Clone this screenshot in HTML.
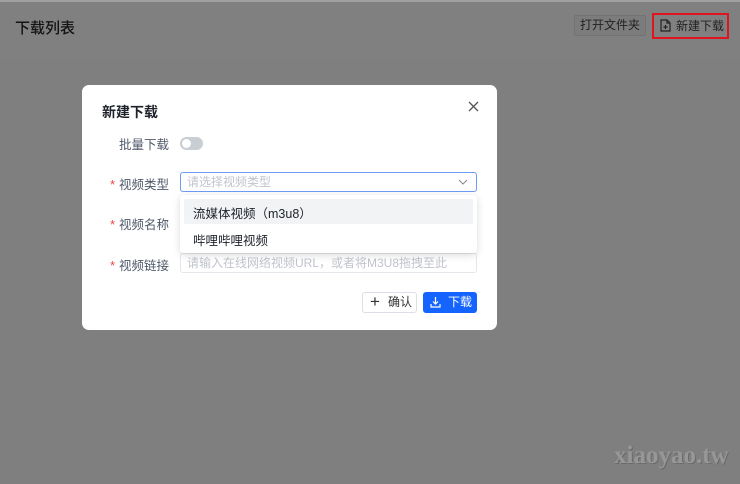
<!DOCTYPE html>
<html><head><meta charset="utf-8"><style>
*{margin:0;padding:0;box-sizing:border-box}
body{width:740px;height:484px;background:#7f7f7f;font-family:"Liberation Sans","Noto Sans CJK SC",sans-serif;position:relative;overflow:hidden;color:#1d2129}
.a{position:absolute}
.hdr{left:0;top:0;width:740px;height:60px;background:#808080;border-top:2px solid #a0a0a0}
.t{left:15px;top:17px;font-size:15px;color:#141414;font-weight:500}
.b1{left:574px;top:15px;width:72px;height:21px;border:1px solid #737373;border-radius:2px;font-size:12px;color:#222;text-align:center;line-height:19px;background:#7c7c7c}
.b2{left:652px;top:13px;width:77px;height:26px;border:2px solid #e0141e;font-size:12px;color:#222;line-height:22px;padding-left:22px}
.modal{left:82px;top:85px;width:415px;height:245px;background:#fff;border-radius:7px}
.lbl{font-size:12.5px;color:#4e5969;text-align:right;width:87px}
.star{color:#f53f3f;margin-right:4px}
.inp{left:180px;width:297px;height:20px;border:1px solid #e5e6eb;border-radius:3px;font-size:12px;color:#c0c4cc;padding-left:6px;line-height:18px}
</style></head><body>
<div class="a hdr"></div>
<div class="a t">下载列表</div>
<div class="a b1">打开文件夹</div>
<div class="a b2"><svg class="a" style="left:6px;top:4px" width="11" height="13" viewBox="0 0 11 13"><path d="M1 1h6l3 3v8H1z M7 1v3h3 M5.5 6v4 M3.5 8h4" fill="none" stroke="#222" stroke-width="1.2"/></svg>新建下载</div>
<div class="a modal">
 <div class="a" style="left:20px;top:17px;font-size:14px;font-weight:bold;color:#1d2129">新建下载</div>
 <svg class="a" style="left:386px;top:16px" width="11" height="11"><path d="M1 1L10 10M10 1L1 10" stroke="#555" stroke-width="1.3"/></svg>
 <div class="a lbl" style="left:0;top:49px">批量下载</div>
 <div class="a" style="left:98px;top:52px;width:23px;height:13px;border-radius:7px;background:#c9cdd4"><div class="a" style="left:2px;top:2px;width:9px;height:9px;border-radius:50%;background:#fff"></div></div>
 <div class="a lbl" style="left:0;top:89px"><span class="star">*</span>视频类型</div>
 <div class="a lbl" style="left:0;top:129px"><span class="star">*</span>视频名称</div>
 <div class="a lbl" style="left:0;top:170px"><span class="star">*</span>视频链接</div>
 <div class="a" style="left:280px;top:207px;width:55px;height:21px;border:1px solid #dcdfe6;border-radius:3px;font-size:12px;color:#333;line-height:19px;padding-left:25px"><span class="a" style="left:7px;top:-1px;font-size:17px;line-height:19px">+</span>确认</div>
 <div class="a" style="left:341px;top:207px;width:54px;height:21px;background:#1664ff;border-radius:3px;font-size:12px;color:#fff;line-height:21px;padding-left:25px"><svg class="a" style="left:7px;top:5px" width="11" height="11"><path d="M5.5 0v7M3 4.5l2.5 2.5 2.5-2.5M1 7v3h9V7" fill="none" stroke="#fff" stroke-width="1.2"/></svg>下载</div>
</div>
<div class="a inp" style="top:172px;border-color:#6d9cf5">请选择视频类型<svg class="a" style="left:277px;top:6px" width="10" height="6"><path d="M1 1l4 4 4-4" fill="none" stroke="#888"/></svg></div>
<div class="a inp" style="top:253px">请输入在线网络视频URL，或者将M3U8拖拽至此</div>
<div class="a" style="left:180px;top:195px;width:297px;height:58px;background:#fff;border-radius:4px;box-shadow:0 2px 8px rgba(0,0,0,.15)">
 <div class="a" style="left:4px;top:4px;width:289px;height:25px;background:#f2f3f5;border-radius:2px"></div>
 <div class="a" style="left:13px;top:8px;font-size:12.5px;color:#1d2129">流媒体视频（m3u8）</div>
 <div class="a" style="left:13px;top:35px;font-size:12.5px;color:#1d2129">哔哩哔哩视频</div>
</div>
<div class="a" style="left:614px;top:442px;font-family:'Liberation Serif',serif;font-size:25px;font-weight:bold;color:#979797;text-shadow:1px 1px 0 #6a6a6a">xiaoyao.tw</div>
</body></html>
